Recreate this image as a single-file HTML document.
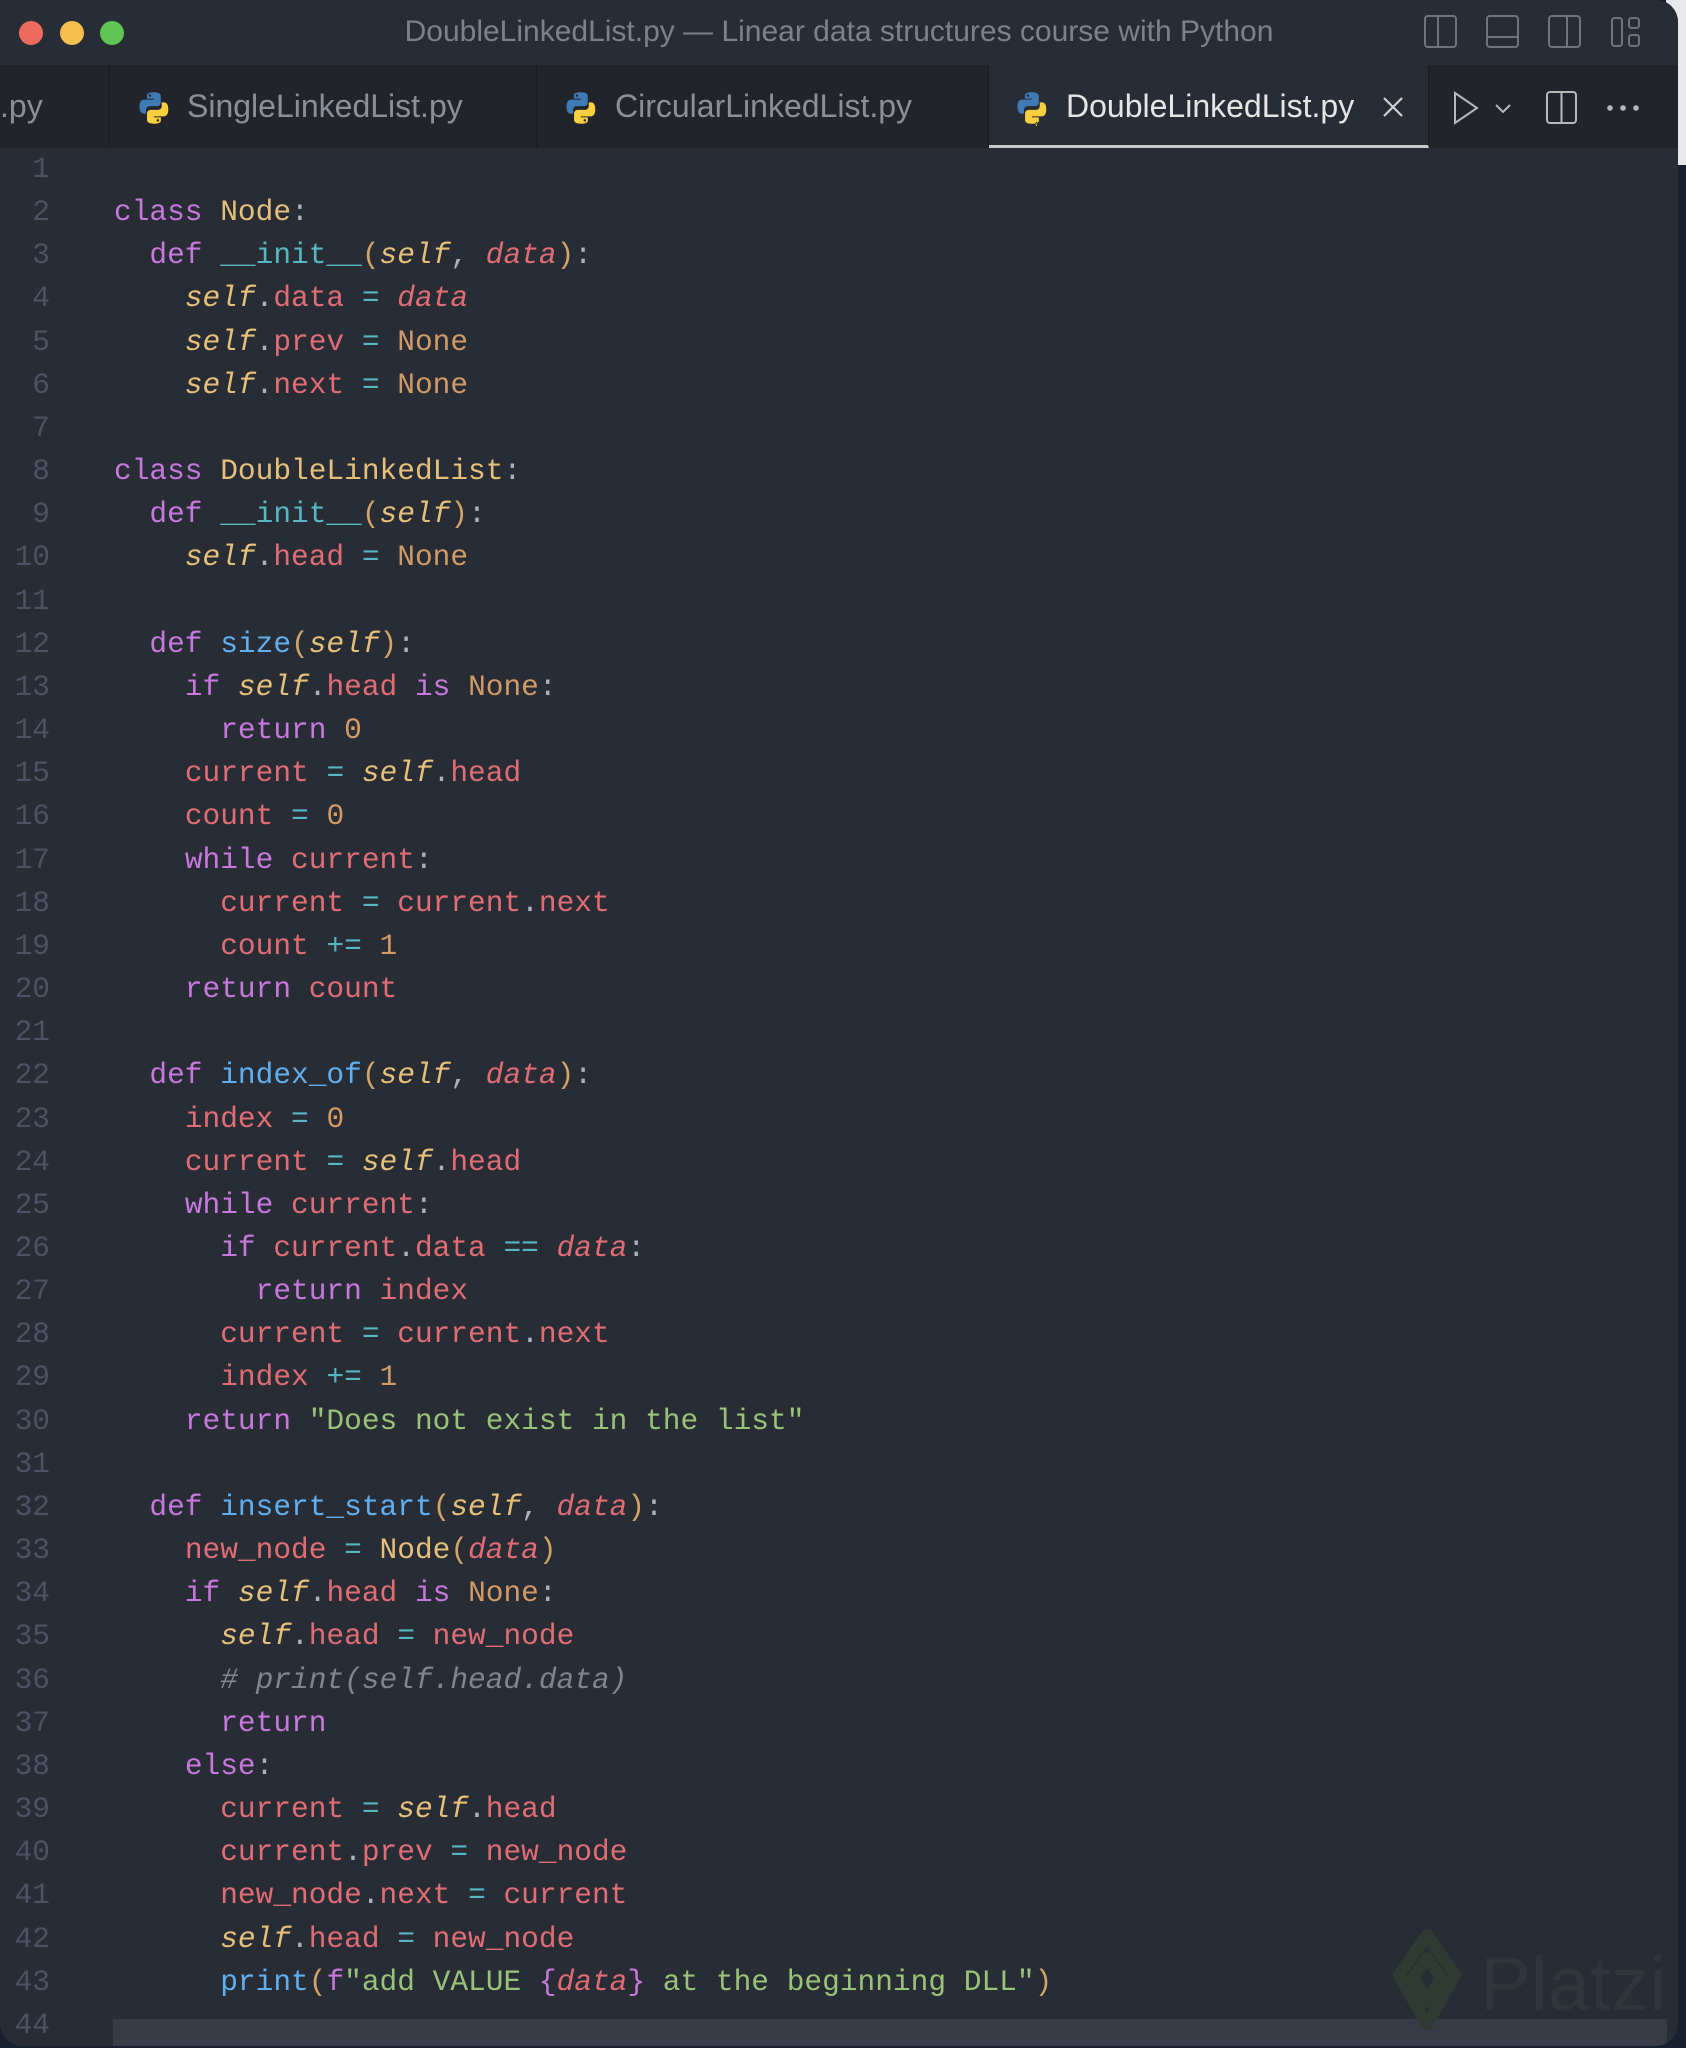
<!DOCTYPE html>
<html><head><meta charset="utf-8"><style>
*{margin:0;padding:0;box-sizing:border-box}
body{width:1686px;height:2048px;background:#16202e;position:relative;overflow:hidden;font-family:"Liberation Sans",sans-serif}
.topw{position:absolute;right:0;top:0;width:20px;height:165px;background:#e8e8ea}
.win{position:absolute;left:0;top:0;width:1678px;height:2046px;background:#282c34;border-radius:0 22px 22px 22px;overflow:hidden}
.title{position:absolute;left:0;top:0;width:100%;height:65px;background:#282c34}
.tl{position:absolute;top:21px;width:24px;height:24px;border-radius:50%}
.ttext{position:absolute;left:0;width:1678px;top:15px;text-align:center;font-size:30px;color:#7c818b}
.tabs{position:absolute;left:0;top:65px;width:100%;height:83px;background:#21252b}
.tab{position:absolute;top:0;height:83px;border-right:1px solid #181a1f}
.tab span{position:absolute;top:23px;font-size:32px;color:#8a8f98;white-space:nowrap}
.tab svg{position:absolute;top:25px}
.ln{position:absolute;left:0;width:50px;text-align:right;font-family:"Liberation Mono",monospace;font-size:29.5px;color:#4b5263;line-height:43.16px}
.cl{position:absolute;left:114px;font-family:"Liberation Mono",monospace;font-size:29.5px;line-height:43.16px;white-space:pre;color:#abb2bf}
.k{color:#c678dd}.c{color:#e5c07b}.f{color:#61afef}.d{color:#56b6c2}.s{color:#e5c07b;font-style:italic}.p{color:#e06c75;font-style:italic}.a{color:#e06c75}.n{color:#d19a66}.g{color:#98c379}.m{color:#7f848e;font-style:italic}.b{color:#d1a568}.pb{color:#c678dd}
.cur{position:absolute;left:113px;top:2019px;width:1554px;height:30px;background:#363b46}
</style></head><body>
<div class="topw"></div>
<div class="win">
<div class="title">
<div class="tl" style="left:19px;background:#ec6a5e"></div>
<div class="tl" style="left:60px;background:#f4bf4f"></div>
<div class="tl" style="left:100px;background:#61c554"></div>
<div class="ttext">DoubleLinkedList.py — Linear data structures course with Python</div>
<svg style="position:absolute;left:1424px;top:14px" width="240" height="36" viewBox="0 0 240 36" fill="none" stroke="#6e737c" stroke-width="2">
<rect x="1" y="2" width="31" height="31" rx="3"/><line x1="14" y1="2" x2="14" y2="33"/>
<rect x="63" y="2" width="31" height="31" rx="3"/><line x1="63" y1="23" x2="94" y2="23"/>
<rect x="125" y="2" width="31" height="31" rx="3"/><line x1="143" y1="2" x2="143" y2="33"/>
<rect x="188" y="4" width="10" height="28" rx="2.5"/><rect x="205" y="4" width="10" height="10" rx="2.5"/><rect x="205" y="21" width="10" height="11" rx="2.5"/>
</svg>
</div>
<div class="tabs">
<div class="tab" style="left:0;width:110px"><span style="left:0">.py</span></div>
<div class="tab" style="left:110px;width:427px"><svg style="left:26px" width="36" height="36" viewBox="0 0 32 32"><path d="M15.8 2c-6.5 0-6.1 2.8-6.1 2.8v2.9h6.2v.9H7.3S3.1 8.1 3.1 14.7s3.6 6.3 3.6 6.3h2.2v-3.1s-.1-3.6 3.6-3.6h6.1s3.4.1 3.4-3.3V5.4S22.5 2 15.8 2zm-3.4 1.9a1.1 1.1 0 110 2.200 1.1 1.1 0 010-2.2z" fill="#3f7ab5"/><path d="M16 30c6.5 0 6.1-2.8 6.1-2.8v-2.9h-6.2v-.9h8.6s4.2.5 4.2-6.1-3.6-6.3-3.6-6.3h-2.2v3.1s.1 3.6-3.6 3.6h-6.1s-3.4-.1-3.4 3.3v5.6S9.3 30 16 30zm3.4-1.9a1.1 1.1 0 110-2.2 1.1 1.1 0 010 2.2z" fill="#f8cf3e"/></svg><span style="left:77px">SingleLinkedList.py</span></div>
<div class="tab" style="left:537px;width:452px"><svg style="left:26px" width="36" height="36" viewBox="0 0 32 32"><path d="M15.8 2c-6.5 0-6.1 2.8-6.1 2.8v2.9h6.2v.9H7.3S3.1 8.1 3.1 14.7s3.6 6.3 3.6 6.3h2.2v-3.1s-.1-3.6 3.6-3.6h6.1s3.4.1 3.4-3.3V5.4S22.5 2 15.8 2zm-3.4 1.9a1.1 1.1 0 110 2.2 1.1 1.1 0 010-2.2z" fill="#3f7ab5"/><path d="M16 30c6.5 0 6.1-2.8 6.1-2.8v-2.9h-6.2v-.9h8.6s4.2.5 4.2-6.1-3.6-6.3-3.6-6.3h-2.2v3.1s.1 3.6-3.6 3.6h-6.1s-3.4-.1-3.4 3.3v5.6S9.3 30 16 30zm3.4-1.9a1.1 1.1 0 110-2.2 1.1 1.1 0 010 2.2z" fill="#f8cf3e"/></svg><span style="left:78px">CircularLinkedList.py</span></div>
<div class="tab" style="left:989px;width:440px;background:#282c34;border-bottom:3px solid #c8c8c8"><svg style="left:25px" width="36" height="36" viewBox="0 0 32 32"><path d="M15.8 2c-6.5 0-6.1 2.8-6.1 2.8v2.9h6.2v.9H7.3S3.1 8.1 3.1 14.7s3.6 6.3 3.6 6.3h2.2v-3.1s-.1-3.6 3.6-3.6h6.1s3.4.1 3.4-3.3V5.4S22.5 2 15.8 2zm-3.4 1.9a1.1 1.1 0 110 2.2 1.1 1.1 0 010-2.2z" fill="#3f7ab5"/><path d="M16 30c6.5 0 6.1-2.8 6.1-2.8v-2.9h-6.2v-.9h8.6s4.2.5 4.2-6.1-3.6-6.3-3.6-6.3h-2.2v3.1s.1 3.6-3.6 3.6h-6.1s-3.4-.1-3.4 3.3v5.6S9.3 30 16 30zm3.4-1.9a1.1 1.1 0 110 2.2 1.1 1.1 0 010 2.2z" fill="#f8cf3e"/></svg><span style="left:77px;color:#e6e6e6">DoubleLinkedList.py</span>
<svg style="left:393px;top:31px" width="22" height="22" viewBox="0 0 22 22" stroke="#d0d0d0" stroke-width="2.2"><line x1="2" y1="2" x2="20" y2="20"/><line x1="20" y1="2" x2="2" y2="20"/></svg></div>
<svg style="position:absolute;left:1450px;top:25px" width="200" height="36" viewBox="0 0 200 36" fill="none" stroke="#b8b8b8" stroke-width="2">
<path d="M5 3 L27 18 L5 33 Z"/>
<path d="M46 15 L53 22 L60 15"/>
<rect x="97" y="2" width="29" height="31" rx="3"/><line x1="111.5" y1="2" x2="111.5" y2="33"/>
<circle cx="160" cy="18" r="1.8" fill="#b8b8b8"/><circle cx="173" cy="18" r="1.8" fill="#b8b8b8"/><circle cx="186" cy="18" r="1.8" fill="#b8b8b8"/>
</svg>
</div>
<div class="cur"></div>
<svg style="position:absolute;left:1385px;top:1930px" width="290" height="100" viewBox="0 0 290 100">
<path d="M42 5 L70 45 L42 95 L14 45 Z M42 28 L56 48 L42 72 L28 48 Z" fill="none" stroke="#2f3a33" stroke-width="12" stroke-linejoin="round"/>
<text x="95" y="80" font-family="Liberation Sans, sans-serif" font-size="76" fill="#30353c">Platzi</text>
</svg>
</div>
<div style="position:absolute;left:0;top:148px;width:1678px">
<div class="ln" style="top:0px">1</div>
<div class="ln" style="top:43.16px">2</div><div class="cl" style="top:43.16px"><span class="k">class</span> <span class="c">Node</span>:</div>
<div class="ln" style="top:86.32px">3</div><div class="cl" style="top:86.32px">  <span class="k">def</span> <span class="d">__init__</span><span class="b">(</span><span class="s">self</span>, <span class="p">data</span><span class="b">)</span>:</div>
<div class="ln" style="top:129.48px">4</div><div class="cl" style="top:129.48px">    <span class="s">self</span>.<span class="a">data</span> <span class="d">=</span> <span class="p">data</span></div>
<div class="ln" style="top:172.64px">5</div><div class="cl" style="top:172.64px">    <span class="s">self</span>.<span class="a">prev</span> <span class="d">=</span> <span class="n">None</span></div>
<div class="ln" style="top:215.8px">6</div><div class="cl" style="top:215.8px">    <span class="s">self</span>.<span class="a">next</span> <span class="d">=</span> <span class="n">None</span></div>
<div class="ln" style="top:258.96px">7</div>
<div class="ln" style="top:302.12px">8</div><div class="cl" style="top:302.12px"><span class="k">class</span> <span class="c">DoubleLinkedList</span>:</div>
<div class="ln" style="top:345.28px">9</div><div class="cl" style="top:345.28px">  <span class="k">def</span> <span class="d">__init__</span><span class="b">(</span><span class="s">self</span><span class="b">)</span>:</div>
<div class="ln" style="top:388.44px">10</div><div class="cl" style="top:388.44px">    <span class="s">self</span>.<span class="a">head</span> <span class="d">=</span> <span class="n">None</span></div>
<div class="ln" style="top:431.6px">11</div>
<div class="ln" style="top:474.76px">12</div><div class="cl" style="top:474.76px">  <span class="k">def</span> <span class="f">size</span><span class="b">(</span><span class="s">self</span><span class="b">)</span>:</div>
<div class="ln" style="top:517.92px">13</div><div class="cl" style="top:517.92px">    <span class="k">if</span> <span class="s">self</span>.<span class="a">head</span> <span class="k">is</span> <span class="n">None</span>:</div>
<div class="ln" style="top:561.08px">14</div><div class="cl" style="top:561.08px">      <span class="k">return</span> <span class="n">0</span></div>
<div class="ln" style="top:604.24px">15</div><div class="cl" style="top:604.24px">    <span class="a">current</span> <span class="d">=</span> <span class="s">self</span>.<span class="a">head</span></div>
<div class="ln" style="top:647.4px">16</div><div class="cl" style="top:647.4px">    <span class="a">count</span> <span class="d">=</span> <span class="n">0</span></div>
<div class="ln" style="top:690.56px">17</div><div class="cl" style="top:690.56px">    <span class="k">while</span> <span class="a">current</span>:</div>
<div class="ln" style="top:733.72px">18</div><div class="cl" style="top:733.72px">      <span class="a">current</span> <span class="d">=</span> <span class="a">current</span>.<span class="a">next</span></div>
<div class="ln" style="top:776.88px">19</div><div class="cl" style="top:776.88px">      <span class="a">count</span> <span class="d">+=</span> <span class="n">1</span></div>
<div class="ln" style="top:820.04px">20</div><div class="cl" style="top:820.04px">    <span class="k">return</span> <span class="a">count</span></div>
<div class="ln" style="top:863.2px">21</div>
<div class="ln" style="top:906.36px">22</div><div class="cl" style="top:906.36px">  <span class="k">def</span> <span class="f">index_of</span><span class="b">(</span><span class="s">self</span>, <span class="p">data</span><span class="b">)</span>:</div>
<div class="ln" style="top:949.52px">23</div><div class="cl" style="top:949.52px">    <span class="a">index</span> <span class="d">=</span> <span class="n">0</span></div>
<div class="ln" style="top:992.68px">24</div><div class="cl" style="top:992.68px">    <span class="a">current</span> <span class="d">=</span> <span class="s">self</span>.<span class="a">head</span></div>
<div class="ln" style="top:1035.84px">25</div><div class="cl" style="top:1035.84px">    <span class="k">while</span> <span class="a">current</span>:</div>
<div class="ln" style="top:1079px">26</div><div class="cl" style="top:1079px">      <span class="k">if</span> <span class="a">current</span>.<span class="a">data</span> <span class="d">==</span> <span class="p">data</span>:</div>
<div class="ln" style="top:1122.16px">27</div><div class="cl" style="top:1122.16px">        <span class="k">return</span> <span class="a">index</span></div>
<div class="ln" style="top:1165.32px">28</div><div class="cl" style="top:1165.32px">      <span class="a">current</span> <span class="d">=</span> <span class="a">current</span>.<span class="a">next</span></div>
<div class="ln" style="top:1208.48px">29</div><div class="cl" style="top:1208.48px">      <span class="a">index</span> <span class="d">+=</span> <span class="n">1</span></div>
<div class="ln" style="top:1251.64px">30</div><div class="cl" style="top:1251.64px">    <span class="k">return</span> <span class="g">"Does not exist in the list"</span></div>
<div class="ln" style="top:1294.8px">31</div>
<div class="ln" style="top:1337.96px">32</div><div class="cl" style="top:1337.96px">  <span class="k">def</span> <span class="f">insert_start</span><span class="b">(</span><span class="s">self</span>, <span class="p">data</span><span class="b">)</span>:</div>
<div class="ln" style="top:1381.12px">33</div><div class="cl" style="top:1381.12px">    <span class="a">new_node</span> <span class="d">=</span> <span class="c">Node</span><span class="b">(</span><span class="p">data</span><span class="b">)</span></div>
<div class="ln" style="top:1424.28px">34</div><div class="cl" style="top:1424.28px">    <span class="k">if</span> <span class="s">self</span>.<span class="a">head</span> <span class="k">is</span> <span class="n">None</span>:</div>
<div class="ln" style="top:1467.44px">35</div><div class="cl" style="top:1467.44px">      <span class="s">self</span>.<span class="a">head</span> <span class="d">=</span> <span class="a">new_node</span></div>
<div class="ln" style="top:1510.6px">36</div><div class="cl" style="top:1510.6px">      <span class="m"># print(self.head.data)</span></div>
<div class="ln" style="top:1553.76px">37</div><div class="cl" style="top:1553.76px">      <span class="k">return</span></div>
<div class="ln" style="top:1596.92px">38</div><div class="cl" style="top:1596.92px">    <span class="k">else</span>:</div>
<div class="ln" style="top:1640.08px">39</div><div class="cl" style="top:1640.08px">      <span class="a">current</span> <span class="d">=</span> <span class="s">self</span>.<span class="a">head</span></div>
<div class="ln" style="top:1683.24px">40</div><div class="cl" style="top:1683.24px">      <span class="a">current</span>.<span class="a">prev</span> <span class="d">=</span> <span class="a">new_node</span></div>
<div class="ln" style="top:1726.4px">41</div><div class="cl" style="top:1726.4px">      <span class="a">new_node</span>.<span class="a">next</span> <span class="d">=</span> <span class="a">current</span></div>
<div class="ln" style="top:1769.56px">42</div><div class="cl" style="top:1769.56px">      <span class="s">self</span>.<span class="a">head</span> <span class="d">=</span> <span class="a">new_node</span></div>
<div class="ln" style="top:1812.72px">43</div><div class="cl" style="top:1812.72px">      <span class="f">print</span><span class="b">(</span><span class="k">f</span><span class="g">"add VALUE </span><span class="pb">{</span><span class="p">data</span><span class="pb">}</span><span class="g"> at the beginning DLL"</span><span class="b">)</span></div>
<div class="ln" style="top:1855.88px">44</div>
</div>
</body></html>
